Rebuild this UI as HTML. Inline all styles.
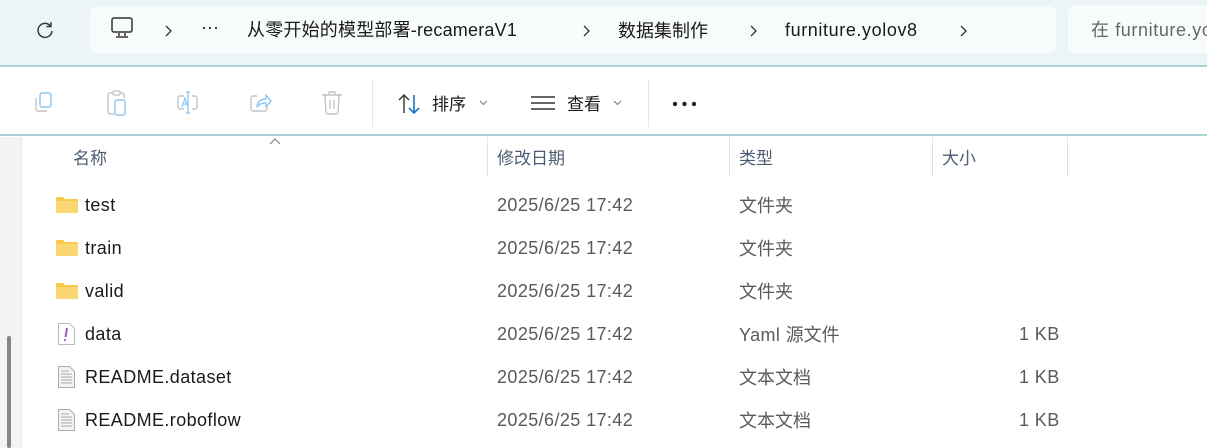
<!DOCTYPE html>
<html><head><meta charset="utf-8"><style>
*{margin:0;padding:0;box-sizing:border-box}
body{width:1207px;height:448px;overflow:hidden;background:#fff;font-family:"Liberation Sans","Noto Sans CJK SC",sans-serif;position:relative}
.top{position:absolute;left:0;top:0;width:1207px;height:65px;background:#ebf4f6}
.addr{position:absolute;left:90px;top:6px;width:966px;height:47px;background:#f8fbfc;border-radius:7px}
.search{position:absolute;left:1068px;top:5px;width:160px;height:48px;background:#f8fbfc;border-radius:7px}
.t{position:absolute;font-size:18px;color:#1a1a1a;white-space:nowrap;line-height:22px}
.hl{position:absolute;left:0;width:1207px;height:2px;background:#a9d2d9}
.left{position:absolute;left:0;top:137px;width:22px;height:311px;background:#f3f3f3;border-right:1px solid #e6e6e6}
.sb{position:absolute;left:7px;top:336px;width:4px;height:112px;background:#858585;border-radius:2px}
.col{position:absolute;top:137px;width:1px;height:40px;background:#e3e3e3}
.h{position:absolute;top:146px;font-size:17px;color:#4c5d73;line-height:22px}
.row{position:absolute;left:0;width:1207px;height:43px;font-size:18px;color:#1a1a1a}
.row span{position:absolute;top:11px;white-space:nowrap;line-height:22px;letter-spacing:0.4px}
.d{color:#5a5a5a}
.c{font-family:"Noto Sans CJK SC",sans-serif;letter-spacing:0!important}
.fold{position:absolute;left:56px;top:14px;width:22px;height:16px}
.ch{position:absolute;top:24px;width:10px;height:14px}
</style></head><body>
<div class="top"></div>
<div class="addr"></div>
<div class="search"></div>
<svg style="position:absolute;left:35px;top:20px" width="20" height="20" viewBox="0 0 20 20"><path d="M15.5 6A7 7 0 1 0 17 11" fill="none" stroke="#333" stroke-width="1.4"/><path d="M16 2v4.5h-4.5" fill="none" stroke="#333" stroke-width="1.4"/></svg>
<svg style="position:absolute;left:110px;top:17px" width="24" height="22" viewBox="0 0 24 22"><rect x="2" y="1" width="20" height="14" rx="2" fill="none" stroke="#333" stroke-width="1.5"/><path d="M9 16v3M15 16v3M6 20h12" stroke="#333" stroke-width="1.5"/></svg>
<svg class="ch" style="left:163px" viewBox="0 0 10 14"><path d="M3 2l5 5-5 5" fill="none" stroke="#333" stroke-width="1.3"/></svg>
<div class="t" style="left:201px;top:16px">···</div>
<div class="t" style="left:247px;top:19px;letter-spacing:0.2px">从零开始的模型部署-recameraV1</div>
<svg class="ch" style="left:581px" viewBox="0 0 10 14"><path d="M3 2l5 5-5 5" fill="none" stroke="#333" stroke-width="1.3"/></svg>
<div class="t c" style="left:618px;top:19px">数据集制作</div>
<svg class="ch" style="left:748px" viewBox="0 0 10 14"><path d="M3 2l5 5-5 5" fill="none" stroke="#333" stroke-width="1.3"/></svg>
<div class="t" style="left:785px;top:19px;letter-spacing:0.6px">furniture.yolov8</div>
<svg class="ch" style="left:958px" viewBox="0 0 10 14"><path d="M3 2l5 5-5 5" fill="none" stroke="#333" stroke-width="1.3"/></svg>
<div class="t" style="left:1091px;top:19px;color:#666;letter-spacing:0.6px">在 furniture.yolov8</div>
<div class="hl" style="top:65px"></div>
<svg style="position:absolute;left:32px;top:90px" width="24" height="26" viewBox="0 0 24 26"><path d="M4 8v11a2 2 0 0 0 2 2h9" fill="none" stroke="#c4c4c4" stroke-width="1.4"/><rect x="8" y="3" width="11" height="14" rx="2" fill="none" stroke="#8fc5ef" stroke-width="1.4"/></svg>
<svg style="position:absolute;left:104px;top:89px" width="26" height="28" viewBox="0 0 26 28"><path d="M9 4H6a2 2 0 0 0-2 2v17a2 2 0 0 0 2 2h4M16 4h2a2 2 0 0 1 2 2v3" fill="none" stroke="#c4c4c4" stroke-width="1.4"/><rect x="9" y="2" width="7" height="4" rx="1" fill="none" stroke="#c4c4c4" stroke-width="1.3"/><rect x="11" y="11" width="10" height="15" rx="2" fill="none" stroke="#8fc5ef" stroke-width="1.4"/></svg>
<svg style="position:absolute;left:175px;top:90px" width="26" height="26" viewBox="0 0 26 26"><path d="M9 6H5a2 2 0 0 0-2 2v9a2 2 0 0 0 2 2h4M17 6h3a2 2 0 0 1 2 2v9a2 2 0 0 1-2 2h-3" fill="none" stroke="#c4c4c4" stroke-width="1.4"/><path d="M13 2v21M11 2h4M11 23h4M7 17l3-9 3 9M8 14h4" fill="none" stroke="#8fc5ef" stroke-width="1.3"/></svg>
<svg style="position:absolute;left:248px;top:91px" width="26" height="24" viewBox="0 0 26 24"><path d="M9 5H5a2 2 0 0 0-2 2v11a2 2 0 0 0 2 2h12a2 2 0 0 0 2-2v-2" fill="none" stroke="#c4c4c4" stroke-width="1.4"/><path d="M9 16c0-5 4-8 9-8V4l5 6-5 6v-4c-4 0-7 1-9 4z" fill="none" stroke="#8fc5ef" stroke-width="1.4" stroke-linejoin="round"/></svg>
<svg style="position:absolute;left:320px;top:90px" width="24" height="26" viewBox="0 0 24 26"><path d="M2 5h20M9 5V2h6v3M5 5l1 17a2 2 0 0 0 2 2h8a2 2 0 0 0 2-2l1-17M10 10v9M14 10v9" fill="none" stroke="#c4c4c4" stroke-width="1.4"/></svg>
<div style="position:absolute;left:372px;top:80px;width:1px;height:47px;background:#e5e5e5"></div>
<svg style="position:absolute;left:396px;top:92px" width="26" height="24" viewBox="0 0 26 24"><path d="M8 21V3M3 8l5-5 5 5" fill="none" stroke="#333" stroke-width="1.4"/><path d="M18 3v18M13 16l5 5 5-5" fill="none" stroke="#1a73c8" stroke-width="1.6"/></svg>
<div class="t c" style="left:432px;top:92px;font-size:17px">排序</div>
<svg style="position:absolute;left:479px;top:100px" width="9" height="6" viewBox="0 0 9 6"><path d="M1 1l3.5 3.5L8 1" fill="none" stroke="#777" stroke-width="1"/></svg>
<svg style="position:absolute;left:530px;top:95px" width="26" height="16" viewBox="0 0 26 16"><path d="M1 2h24M1 8h24M1 14h24" stroke="#333" stroke-width="1.4"/></svg>
<div class="t c" style="left:567px;top:92px;font-size:17px">查看</div>
<svg style="position:absolute;left:613px;top:100px" width="9" height="6" viewBox="0 0 9 6"><path d="M1 1l3.5 3.5L8 1" fill="none" stroke="#777" stroke-width="1"/></svg>
<div style="position:absolute;left:648px;top:80px;width:1px;height:47px;background:#e5e5e5"></div>
<svg style="position:absolute;left:672px;top:101px" width="26" height="6" viewBox="0 0 26 6"><circle cx="3" cy="3" r="2.2" fill="#222"/><circle cx="12.5" cy="3" r="2.2" fill="#222"/><circle cx="22" cy="3" r="2.2" fill="#222"/></svg>
<div class="hl" style="top:134px"></div>
<div class="left"></div><div class="sb"></div>
<svg style="position:absolute;left:269px;top:138px" width="12" height="7" viewBox="0 0 12 7"><path d="M1 6l5-5 5 5" fill="none" stroke="#777" stroke-width="1"/></svg>
<div class="col" style="left:487px"></div><div class="col" style="left:729px"></div><div class="col" style="left:932px"></div><div class="col" style="left:1067px"></div>
<div class="h c" style="left:73px">名称</div>
<div class="h c" style="left:497px">修改日期</div>
<div class="h c" style="left:739px">类型</div>
<div class="h c" style="left:942px">大小</div>

<div class="row" style="top:183px"><svg class="fold" viewBox="0 0 22 16"><path d="M0 1a1 1 0 0 1 1-1h6l2 2h12a1 1 0 0 1 1 1v12a1 1 0 0 1-1 1H1a1 1 0 0 1-1-1z" fill="#f8c94a"/><rect x="0" y="4" width="22" height="12" rx="1" fill="#fbd773"/></svg><span style="left:85px">test</span><span class="d" style="left:497px">2025/6/25 17:42</span><span class="d c" style="left:739px">文件夹</span></div>
<div class="row" style="top:226px"><svg class="fold" viewBox="0 0 22 16"><path d="M0 1a1 1 0 0 1 1-1h6l2 2h12a1 1 0 0 1 1 1v12a1 1 0 0 1-1 1H1a1 1 0 0 1-1-1z" fill="#f8c94a"/><rect x="0" y="4" width="22" height="12" rx="1" fill="#fbd773"/></svg><span style="left:85px">train</span><span class="d" style="left:497px">2025/6/25 17:42</span><span class="d c" style="left:739px">文件夹</span></div>
<div class="row" style="top:269px"><svg class="fold" viewBox="0 0 22 16"><path d="M0 1a1 1 0 0 1 1-1h6l2 2h12a1 1 0 0 1 1 1v12a1 1 0 0 1-1 1H1a1 1 0 0 1-1-1z" fill="#f8c94a"/><rect x="0" y="4" width="22" height="12" rx="1" fill="#fbd773"/></svg><span style="left:85px">valid</span><span class="d" style="left:497px">2025/6/25 17:42</span><span class="d c" style="left:739px">文件夹</span></div>
<div class="row" style="top:312px"><svg style="position:absolute;left:58px;top:11px" width="17" height="22" viewBox="0 0 17 22"><path d="M.5.5h11l5 5v16H.5z" fill="#fff" stroke="#bbb"/><path d="M9 5l-1.5 9" stroke="#9b59c6" stroke-width="2"/><circle cx="7" cy="17" r="1.1" fill="#9b59c6"/></svg><span style="left:85px">data</span><span class="d" style="left:497px">2025/6/25 17:42</span><span class="d" style="left:739px">Yaml <span class="c" style="position:static">源文件</span></span><span class="d" style="left:1019px">1 KB</span></div>
<div class="row" style="top:355px"><svg style="position:absolute;left:58px;top:11px" width="17" height="22" viewBox="0 0 17 22"><path d="M.5.5h11l5 5v16H.5z" fill="#f4f4f4" stroke="#aaa"/><path d="M3 5h8M3 8h11M3 11h11M3 14h11M3 17h11" stroke="#aaa"/></svg><span style="left:85px">README.dataset</span><span class="d" style="left:497px">2025/6/25 17:42</span><span class="d c" style="left:739px">文本文档</span><span class="d" style="left:1019px">1 KB</span></div>
<div class="row" style="top:398px"><svg style="position:absolute;left:58px;top:11px" width="17" height="22" viewBox="0 0 17 22"><path d="M.5.5h11l5 5v16H.5z" fill="#f4f4f4" stroke="#aaa"/><path d="M3 5h8M3 8h11M3 11h11M3 14h11M3 17h11" stroke="#aaa"/></svg><span style="left:85px">README.roboflow</span><span class="d" style="left:497px">2025/6/25 17:42</span><span class="d c" style="left:739px">文本文档</span><span class="d" style="left:1019px">1 KB</span></div>
</body></html>
